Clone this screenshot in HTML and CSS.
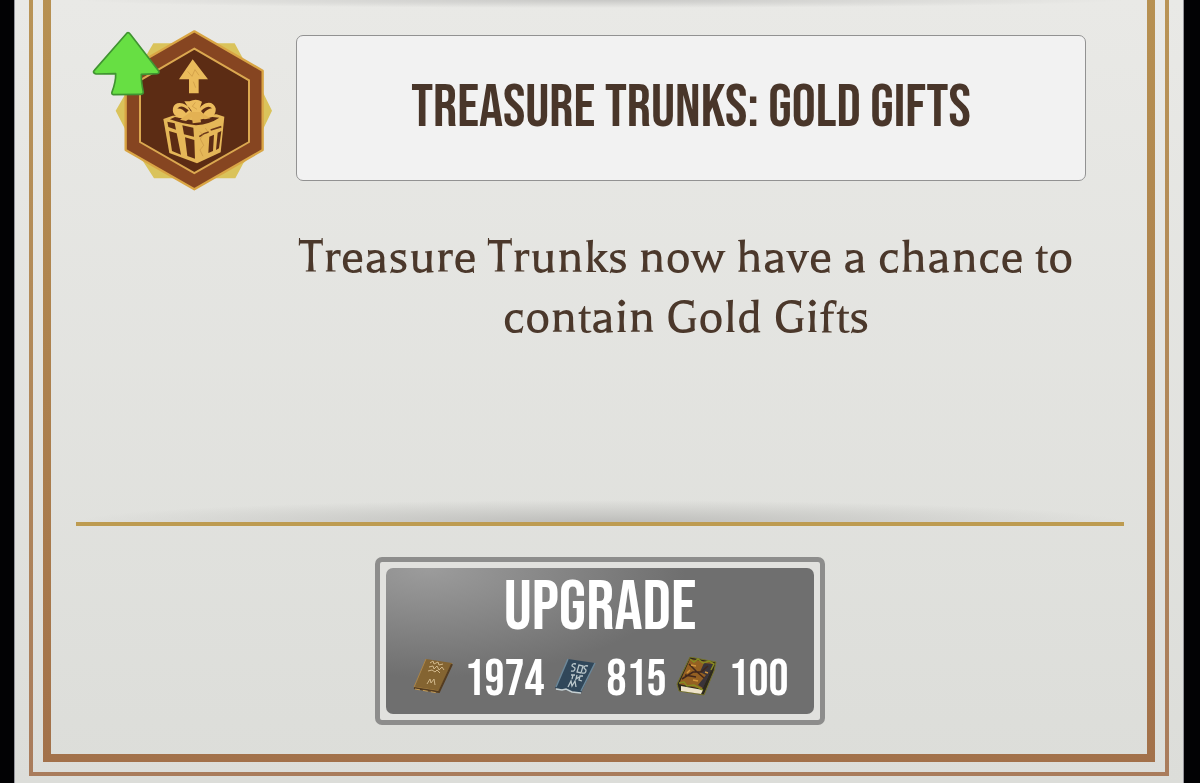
FILE: index.html
```html
<!DOCTYPE html>
<html lang="en">
<head>
<meta charset="utf-8">
<meta name="viewport" content="width=device-width, initial-scale=1">
<title>Treasure Trunks: Gold Gifts</title>
<link rel="stylesheet" href="styles.css">
</head>
<body>
<div class="sheet">
<div class="frame frame-outer">
<main class="frame frame-inner">
  <div class="top-shade"></div>
  <section class="perk">
    <svg class="badge" viewBox="80 20 210 180" aria-hidden="true">
      <g transform="translate(80 20) scale(.33333)">
        <path d="M220 70H464L490 118 540 170 548 215 576 272 548 330 520 400 490 430 466 475H222L190 425 145 385 134 325 107 272 140 215 150 160 192 118Z" fill="#dac35b"/>
        <path d="M343 34L548 152V390L343 508 137 390V152Z" fill="#864521" stroke="#d9a544" stroke-width="7" stroke-linejoin="round"/>
        <path d="M343 86L507 181V366L343 459 180 366V181Z" fill="#5c2c14" stroke="#dba850" stroke-width="6"/>
        <path d="M338 118L384 178H356V220H327V178H297Z" fill="#eabb5b"/>
        <path d="M250 297L278 287 410 283 433 290 422 397 351 430 268 399Z" fill="#e5b758"/>
        <path d="M262 305L284 310 288 329 265 321ZM267 333L290 340 303 404 276 393ZM307 316L340 323 342 350 312 343ZM315 352L343 360 345 416 322 408ZM388 350L402 344 399 393 385 399ZM413 338L424 333 417 385 408 390Z" fill="#5c2c14"/>
        <path d="M358 350Q372 339 386 336M392 330L424 320" fill="none" stroke="#6b381a" stroke-width="5"/>
        <path d="M270 298Q305 311 348 316Q390 312 418 293L397 291 344 302 285 291Z" fill="#5c2c14"/>
        <path d="M337 276C320 245 285 240 279 264C275 285 292 293 309 295C322 289 334 285 337 276ZM352 276C368 242 400 240 407 265C409 285 395 297 375 291C365 290 357 282 352 276ZM329 244Q348 234 366 245L356 274Q346 283 332 273L313 244Z" fill="#ecbd5e"/>
        <path d="M326 271Q303 251 292 266Q304 263 318 279ZM363 273Q385 253 396 265Q380 267 370 281Z" fill="#5c2c14"/>
        <path d="M331 276L300 299 318 303 336 290 338 310 363 307 360 287 374 298 391 295 361 276Z" fill="#e3b153"/>
        <g fill="none" stroke="#b78236" stroke-width="2" opacity=".65"><path d="M360 335L369 344 361 357 371 376 360 390 369 409M376 324L383 335M323 154L336 169 345 149 357 166M340 185L347 203M346 247L337 259 351 268"/></g>
        <path d="M141 39Q146 36 151 43L236 153Q240 160 231 161L184 163Q183 181 190 217Q189 223 181 223L100 224Q94 223 96 216Q108 184 107 161L48 162Q36 158 43 151Z" fill="#67df43" stroke="#409431" stroke-width="5" stroke-linejoin="round"/>
      </g>
    </svg>
    <div class="perk-text">
      <h1 class="title">TREASURE TRUNKS: GOLD GIFTS</h1>
      <p class="description">Treasure Trunks now have a chance to contain Gold Gifts</p>
    </div>
  </section>
  <div class="divider"></div>
  <button class="upgrade" type="button">
    <span class="upgrade-face">
      <span class="upgrade-label">UPGRADE</span>
      <span class="costs">
        <span class="cost">
          <svg class="book" viewBox="0 0 42 42" aria-hidden="true"><path d="M14 2L40 6 27 36 2 32Z" fill="#846431"/><path d="M14 2L2 30 27 34 40 6" fill="none" stroke="#ad8443"/><path d="M2 31L27 35 40 7" fill="none" stroke="#543c20" stroke-width="2"/><path d="M3 32L26 36" stroke="#c69d58" stroke-dasharray="5 3"/><path d="M18 6l3-2 1 3 4-2 1 3 4-1M17 10l4-1 1 3 3-3 2 4 3-3 2 3M16 14l4-1 3 2 2-2 3 3M15 27l3-5 1 4 3-4 1 6" fill="none" stroke="#d1b88b"/></svg>
          <span>1974</span>
        </span>
        <span class="cost">
          <svg class="book" viewBox="0 0 42 42" aria-hidden="true"><path d="M14 2L41 6 27 36 1 31Z" fill="#30475a"/><path d="M14 2L2 30M41 6L27 34" fill="none" stroke="#6c8798" stroke-width="1.5"/><path d="M2 32L8 33 12 32 18 35 27 36" fill="none" stroke="#c5d0d3" stroke-width="1.5"/><path d="M22 7q-4-1-4 2l3 2q0 4-4 3M25 8l-2 7 4 1 2-7ZM34 9q-4-1-4 2l2 2q0 4-4 3M17 18h4M19 18l-1 4M23 18l-1 4 3-2M29 19h-3l-1 4 3 1M14 30l3-6 1 5 3-5 1 6" fill="none" stroke="#bac7cb" stroke-width="1.3"/></svg>
          <span>815</span>
        </span>
        <span class="cost">
          <svg class="book" viewBox="0 2 42 42" aria-hidden="true"><path d="M14 2L40 7 38 16 28 40 3 36 1 29Z" fill="#2d291d" stroke="#77742b"/><path d="M14 4L38 8 26 34 3 29Z" fill="#946022"/><path d="M28 8L38 9 27 33 22 30 30 20 24 17Z" fill="#3a3439"/><path d="M5 31L27 35 25 39 5 36Z" fill="#eee3c8"/><path d="M14 4L18 7 22 4 27 8 33 6 38 9 35 15M3 28L8 27 11 31 18 30 27 35" fill="none" stroke="#868b21" stroke-width="1.5"/><path d="M6 24L17 17 25 17 32 11M13 9L20 16 28 23M9 20L20 22" fill="none" stroke="#41271c" stroke-width="1.5"/><path d="M15 10l5 1M11 18l3-3M17 25l5 1M29 17l3 1" stroke="#d1943b" stroke-width="1.5"/></svg>
          <span>100</span>
        </span>
      </span>
    </span>
  </button>
</main>
</div>
</div>
</body>
</html>
```
FILE: styles.css
```css
* {
  box-sizing: border-box;
}

body {
  margin: 0;
  background: #020204;
}

.sheet {
  display: flex;
  min-height: 100vh;
  margin: 0 16px 0 14px;
  padding: 0 14px 7px;
  border: solid #96969c;
  border-width: 0 1px;
  background: linear-gradient(#e9e9e6, #dcddd9);
}

.frame {
  flex: 1;
  display: flex;
  border-style: solid;
  border-top: 0;
}

.frame-outer {
  padding: 0 10px 10px;
  border-width: 0 4px 4px;
  border-image: linear-gradient(#b99456, #a97c5c) 4;
}

.frame-inner {
  flex-direction: column;
  padding: 0 23px 29px 25px;
  border-width: 0 8px 8px;
  border-image: linear-gradient(#b79152, #a2714a) 8;
}

.top-shade {
  height: 8px;
  background: radial-gradient(ellipse 50% 100% at 50% 0, #c8c8c6, transparent);
}

.perk {
  display: flex;
  flex: 1;
  gap: 6px;
  padding: 12px 38px 0 4px;
}

.badge {
  flex: none;
  width: 210px;
  height: 180px;
}

.perk-text {
  flex: 1;
  padding-top: 15px;
}

.title {
  display: flex;
  align-items: center;
  justify-content: center;
  min-height: 146px;
  margin: 0;
  padding: 0 12px;
  border: 1px solid #929292;
  border-radius: 7px;
  background: #f2f2f2;
  color: #49362a;
  font: 400 60px/60px "Bebas Neue", "Liberation Sans Narrow", sans-serif;
  text-align: center;
}

.description {
  margin: 0;
  padding: 46px 10px 0 0;
  color: #4b382b;
  font: 53px/60px "Balthazar", "Liberation Serif", serif;
  text-align: center;
}

.divider {
  height: 26px;
  border-bottom: 4px solid #bd9b50;
  background: radial-gradient(ellipse 50% 100% at 50% 100%, #bdbdba, transparent);
}

.upgrade {
  align-self: center;
  display: flex;
  width: 450px;
  max-width: 100%;
  min-height: 168px;
  margin: 31px 0 0;
  padding: 6px;
  border: 5px solid #8d8d8c;
  border-radius: 7px;
  background: #e1e1de;
  color: #fff;
  font: 400 50px/50px "Bebas Neue", "Liberation Sans Narrow", sans-serif;
  cursor: pointer;
}

.upgrade-face {
  flex: 1;
  display: flex;
  flex-direction: column;
  align-items: center;
  padding: 6px 0;
  border-radius: 7px;
  background: radial-gradient(ellipse 60% 75% at 10% 0, #9c9c9c, #6f6f6f);
}

.upgrade-label {
  font-size: 70px;
  line-height: 68px;
}

.costs {
  display: flex;
  gap: 9px;
  padding-top: 13px;
}

.cost {
  display: flex;
  align-items: center;
  gap: 11px;
}

.book {
  flex: none;
  width: 42px;
  height: 42px;
  margin-bottom: 4px;
}
```
